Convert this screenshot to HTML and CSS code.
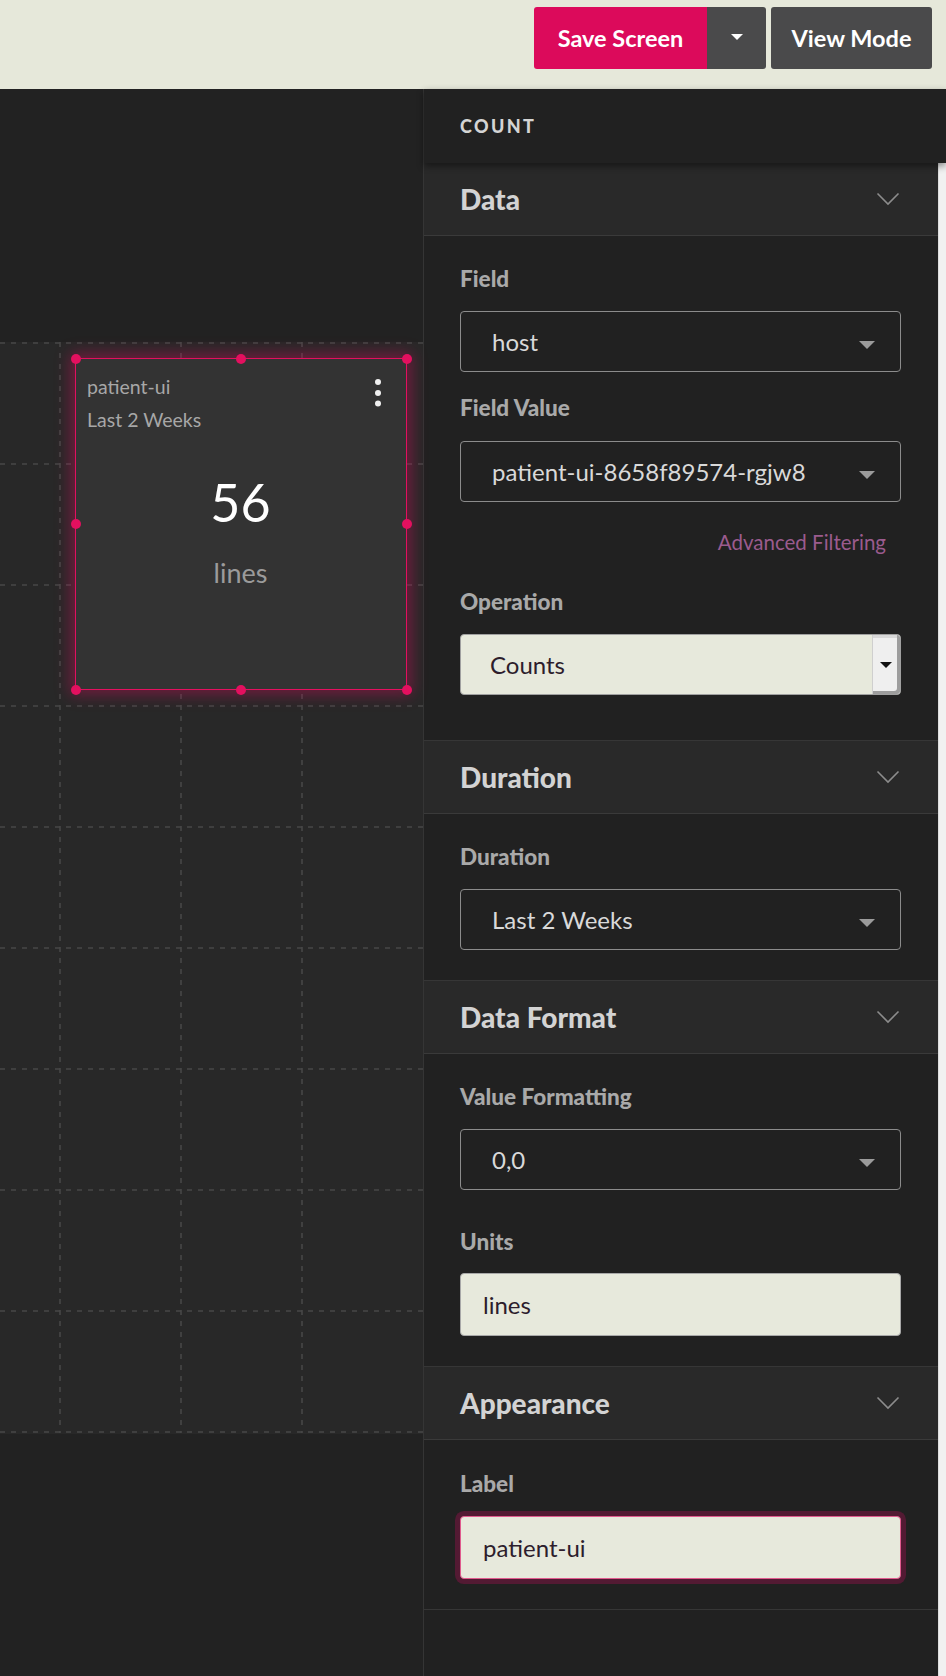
FILE: index.html
```html
<!DOCTYPE html>
<html lang="en">
<head>
<meta charset="utf-8">
<title>Count widget editor</title>
<link rel="stylesheet" href="styles.css">
</head>
<body>
<header class="topbar">
  <div class="btn-group">
    <button class="btn btn-primary">Save Screen</button>
    <button class="btn btn-caret" aria-label="More"><span class="caret-white"></span></button>
  </div>
  <button class="btn btn-dark">View Mode</button>
</header>
<div class="main">
  <div class="canvas">
    <div class="canvas-top"></div>
    <div class="grid">
      <svg class="grid-lines" width="423" height="1092" viewBox="0 0 423 1092">
        <g stroke="#474747" stroke-width="1.6" stroke-dasharray="5 6" fill="none">
          <line x1="60" y1="0" x2="60" y2="1091"/>
          <line x1="181" y1="0" x2="181" y2="1091"/>
          <line x1="302" y1="0" x2="302" y2="1091"/>
          <line x1="0" y1="1" x2="423" y2="1"/>
          <line x1="0" y1="122" x2="423" y2="122"/>
          <line x1="0" y1="243" x2="423" y2="243"/>
          <line x1="0" y1="364" x2="423" y2="364"/>
          <line x1="0" y1="485" x2="423" y2="485"/>
          <line x1="0" y1="606" x2="423" y2="606"/>
          <line x1="0" y1="727" x2="423" y2="727"/>
          <line x1="0" y1="848" x2="423" y2="848"/>
          <line x1="0" y1="969" x2="423" y2="969"/>
          <line x1="0" y1="1090" x2="423" y2="1090"/>
        </g>
      </svg>
      <div class="widget">
        <div class="widget-head">
          <div class="widget-title">patient-ui</div>
          <div class="widget-sub">Last 2 Weeks</div>
        </div>
        <svg class="kebab" width="8" height="30" viewBox="0 0 8 30">
          <circle cx="4" cy="4" r="3" fill="#f0f0f0"/>
          <circle cx="4" cy="15" r="3" fill="#f0f0f0"/>
          <circle cx="4" cy="25.5" r="3" fill="#f0f0f0"/>
        </svg>
        <div class="widget-value">56</div>
        <div class="widget-unit">lines</div>
        <span class="handle h-tl"></span>
        <span class="handle h-tm"></span>
        <span class="handle h-tr"></span>
        <span class="handle h-ml"></span>
        <span class="handle h-mr"></span>
        <span class="handle h-bl"></span>
        <span class="handle h-bm"></span>
        <span class="handle h-br"></span>
      </div>
    </div>
  </div>
  <aside class="sidebar">
    <div class="side-title">COUNT</div>
    <div class="side-scroll">
      <div class="side-content">
        <section class="section">
          <div class="section-head"><h2>Data</h2><svg class="chev" width="24" height="14" viewBox="0 0 24 14"><path d="M1.5 1.5 L12 12 L22.5 1.5" fill="none" stroke="#8c8c8c" stroke-width="1.6"/></svg></div>
          <div class="section-body body-data">
            <div class="field">
              <label>Field</label>
              <div class="select"><span>host</span><span class="caret"></span></div>
            </div>
            <div class="field field-gap">
              <label>Field Value</label>
              <div class="select"><span>patient-ui-8658f89574-rgjw8</span><span class="caret"></span></div>
            </div>
            <div class="adv-link">Advanced Filtering</div>
            <div class="field field-op">
              <label>Operation</label>
              <div class="select select-light"><span>Counts</span><span class="native-btn"><span class="caret-black"></span></span></div>
            </div>
          </div>
        </section>
        <section class="section">
          <div class="section-head"><h2>Duration</h2><svg class="chev" width="24" height="14" viewBox="0 0 24 14"><path d="M1.5 1.5 L12 12 L22.5 1.5" fill="none" stroke="#8c8c8c" stroke-width="1.6"/></svg></div>
          <div class="section-body">
            <div class="field">
              <label>Duration</label>
              <div class="select"><span>Last 2 Weeks</span><span class="caret"></span></div>
            </div>
          </div>
        </section>
        <section class="section">
          <div class="section-head"><h2>Data Format</h2><svg class="chev" width="24" height="14" viewBox="0 0 24 14"><path d="M1.5 1.5 L12 12 L22.5 1.5" fill="none" stroke="#8c8c8c" stroke-width="1.6"/></svg></div>
          <div class="section-body">
            <div class="field">
              <label>Value Formatting</label>
              <div class="select"><span>0,0</span><span class="caret"></span></div>
            </div>
            <div class="field field-units">
              <label>Units</label>
              <div class="input">lines</div>
            </div>
          </div>
        </section>
        <section class="section">
          <div class="section-head"><h2>Appearance</h2><svg class="chev" width="24" height="14" viewBox="0 0 24 14"><path d="M1.5 1.5 L12 12 L22.5 1.5" fill="none" stroke="#8c8c8c" stroke-width="1.6"/></svg></div>
          <div class="section-body body-app">
            <div class="field">
              <label>Label</label>
              <div class="input input-focus">patient-ui</div>
            </div>
          </div>
        </section>
      </div>
      <div class="scrolltrack"></div>
    </div>
  </aside>
</div>
</body>
</html>
```

FILE: styles.css
```css
* { box-sizing: border-box; }
html, body {
  margin: 0;
  padding: 0;
  width: 946px;
  height: 1676px;
  overflow: hidden;
  background: #222222;
  font-family: Lato, "Liberation Sans", sans-serif;
}

.topbar {
  height: 89px;
  background: #e6e8da;
  display: flex;
  justify-content: flex-end;
  align-items: flex-start;
  padding: 7px 14px 0 0;
  gap: 5px;
}
.btn-group { display: flex; }
.btn {
  height: 62px;
  border: 0;
  margin: 0;
  font-family: inherit;
  font-size: 23.5px;
  font-weight: 700;
  color: #ffffff;
  padding: 0;
  border-radius: 3px;
  display: flex;
  align-items: center;
  justify-content: center;
}
.btn-primary {
  background: #dc0a5b;
  width: 173px;
  border-radius: 3px 0 0 3px;
}
.btn-caret {
  background: #4a4a4b;
  width: 59px;
  padding: 0;
  border-radius: 0 3px 3px 0;
}
.caret-white {
  width: 0; height: 0;
  border-left: 6px solid transparent;
  border-right: 6px solid transparent;
  border-top: 6px solid #ffffff;
  margin-top: -2px;
}
.btn-dark {
  background: #4a4a4b;
  width: 161px;
}

.main {
  display: flex;
  height: 1587px;
}

/* canvas */
.canvas {
  width: 423px;
  flex: none;
  background: #222222;
  display: flex;
  flex-direction: column;
}
.canvas-top { height: 253px; }
.grid {
  position: relative;
  height: 1092px;
  background: #282828;
}
.grid-lines { display: block; }

.widget {
  position: absolute;
  left: 75px;
  top: 16px;
  width: 332px;
  height: 332px;
  background: #333333;
  border: 1.5px solid #e3105f;
  box-shadow: 0 0 14px 5px rgba(210, 12, 90, 0.42);
  padding: 11px 12px 0 11px;
}
.widget-head {
  font-size: 19.5px;
  line-height: 33px;
  color: #a7a7a7;
}
.widget-value {
  margin-top: 36px;
  text-align: center;
  font-size: 52px;
  line-height: 60px;
  color: #ffffff;
}
.widget-unit {
  margin-top: 24px;
  text-align: center;
  font-size: 27px;
  line-height: 34px;
  color: #9b9b9b;
}
.kebab {
  position: absolute;
  right: 24px;
  top: 19px;
}
.handle {
  position: absolute;
  width: 10px;
  height: 10px;
  border-radius: 50%;
  background: #e3105f;
}
.h-tl { left: -5.5px; top: -5.5px; }
.h-tm { left: calc(50% - 5px); top: -5.5px; }
.h-tr { right: -5.5px; top: -5.5px; }
.h-ml { left: -5.5px; top: calc(50% - 5px); }
.h-mr { right: -5.5px; top: calc(50% - 5px); }
.h-bl { left: -5.5px; bottom: -5.5px; }
.h-bm { left: calc(50% - 5px); bottom: -5.5px; }
.h-br { right: -5.5px; bottom: -5.5px; }

/* sidebar */
.sidebar {
  flex: 1;
  background: #212121;
  border-left: 1px solid #353535;
  display: flex;
  flex-direction: column;
}
.side-title {
  height: 74px;
  flex: none;
  display: flex;
  align-items: center;
  padding-left: 36px;
  font-size: 18px;
  font-weight: 900;
  letter-spacing: 2.4px;
  color: #d4d4d4;
  background: #212121;
  box-shadow: 0 3px 7px rgba(0, 0, 0, 0.45);
  position: relative;
  z-index: 2;
}
.side-scroll {
  flex: 1;
  display: flex;
}
.side-content {
  flex: 1;
}
.scrolltrack {
  width: 8px;
  flex: none;
  background: #f1f1f1;
  border-left: 1px solid #dedede;
}

.section {
  border-bottom: 1px solid #363636;
}
.section-head {
  height: 73px;
  background: #292929;
  border-bottom: 1px solid #3a3a3a;
  display: flex;
  align-items: center;
  justify-content: space-between;
  padding: 0 38px 0 36px;
}
.section-head h2 {
  margin: 0;
  font-size: 28px;
  font-weight: 900;
  color: #d3d3d3;
}
.chev { display: block; }

.section-body {
  padding: 31px 37px 30px 36px;
}
.body-data { padding-bottom: 45px; }
.body-app { padding-top: 32px; }

.field label {
  display: block;
  font-size: 22.5px;
  font-weight: 900;
  line-height: 24px;
  color: #a9a9a9;
  margin-bottom: 20px;
}
.field-gap { margin-top: 24px; }
.field-gap label { margin-bottom: 21px; }
.field-op { margin-top: 36px; }
.field-units { margin-top: 40px; }
.field-units label { margin-bottom: 19px; }

.adv-link {
  margin-top: 28px;
  text-align: right;
  padding-right: 15px;
  font-size: 20.5px;
  line-height: 24px;
  color: #9b5b8e;
}

.select {
  height: 61px;
  border: 1px solid #8c8c8c;
  border-radius: 4px;
  display: flex;
  align-items: center;
  padding-left: 31px;
  font-size: 24px;
  color: #d9d9d9;
}
.caret {
  margin-left: auto;
  margin-right: 25px;
  margin-top: 6px;
  width: 0; height: 0;
  border-left: 8.5px solid transparent;
  border-right: 8.5px solid transparent;
  border-top: 8.5px solid #9b9b9b;
}
.select-light {
  background: #e7e9dc;
  border-color: #a0a0a0;
  color: #2d1d2c;
  padding-left: 29px;
  align-items: stretch;
}
.select-light > span:first-child {
  display: flex;
  align-items: center;
}
.native-btn {
  margin-left: auto;
  width: 28px;
  background: #efefef;
  border-left: 1px solid #cfcfcf;
  box-shadow: inset -3px -3px 0 #9d9d9d, inset 0 3px 0 #d8d8d8;
  border-radius: 0 3px 3px 0;
  display: flex;
  align-items: center;
  justify-content: center;
}
.caret-black {
  width: 0; height: 0;
  border-left: 6px solid transparent;
  border-right: 6px solid transparent;
  border-top: 6px solid #111111;
  margin-left: -2px;
}

.input {
  height: 63px;
  background: #e7e9dc;
  border: 1px solid #a8a8a8;
  border-radius: 4px;
  display: flex;
  align-items: center;
  padding-left: 22px;
  font-size: 24px;
  color: #2d1d2c;
}
.input-focus {
  border-color: #e05a8e;
  box-shadow: 0 0 0 5px #531a33;
}
```
